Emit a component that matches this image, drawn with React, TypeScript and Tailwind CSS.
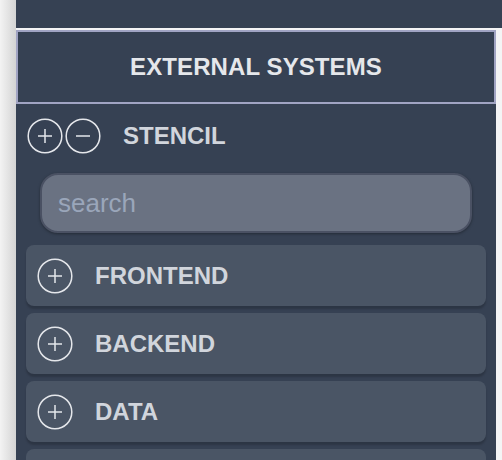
const groups = ["FRONTEND", "BACKEND", "DATA"];

function RoundIcon({ minus = false }: { minus?: boolean }) {
  return (
    <svg width="36" height="36" viewBox="0 0 36 36" fill="none" className="shrink-0">
      <circle cx="18" cy="18" r="16.8" stroke="#e5e7eb" strokeWidth="1.5" />
      <line x1="11" y1="18" x2="25" y2="18" stroke="#e5e7eb" strokeWidth="1.5" />
      {!minus && <line x1="18" y1="11" x2="18" y2="25" stroke="#e5e7eb" strokeWidth="1.5" />}
    </svg>
  );
}

export default function App() {
  return (
    <div className="flex h-[460px] w-[502px] overflow-hidden bg-[#f4f4f5] font-['Liberation_Sans',Arial,sans-serif]">
      <div className="w-4 shrink-0 bg-gradient-to-r from-[#f3f3f3] to-[#d4d4d4]" />
      <div className="flex flex-1 flex-col">
        <div className="h-7 shrink-0 bg-gray-700" />
        <div className="mt-[2px] flex w-[480px] flex-1 flex-col bg-gray-700">
          <div className="flex h-[74px] shrink-0 items-center justify-center border-2 border-[#a1a4c3] text-[24px] font-bold tracking-[0.1px] text-gray-200">
            EXTERNAL SYSTEMS
          </div>

          <div className="flex items-center pl-[11px] pt-[14px]">
            <div className="flex gap-[2px]">
              <RoundIcon />
              <RoundIcon minus />
            </div>
            <span className="ml-[22px] text-[24px] font-bold text-gray-300">STENCIL</span>
          </div>

          <div className="px-6 pt-[19px]">
            <div className="flex h-[60px] items-center rounded-[18px] border-2 border-[#4a5163] bg-gray-500 px-4 shadow-[0_1px_3px_rgba(0,0,0,0.35)]">
              <span className="text-[26px] text-[#9aa6ba]">search</span>
            </div>
          </div>

          <div className="flex flex-col gap-[7px] px-[10px] pt-3">
            {groups.map((g) => (
              <div
                key={g}
                className="flex h-[61px] shrink-0 items-center rounded-lg bg-gray-600 pl-[11px] shadow-[0_3px_2px_rgba(0,0,0,0.18)]"
              >
                <RoundIcon />
                <span className="ml-[22px] text-[24px] font-bold text-gray-300">{g}</span>
              </div>
            ))}
            {/* next group, only its top edge is in view */}
            <div className="h-[61px] shrink-0 rounded-lg bg-gray-600" />
          </div>
        </div>
      </div>
    </div>
  );
}
